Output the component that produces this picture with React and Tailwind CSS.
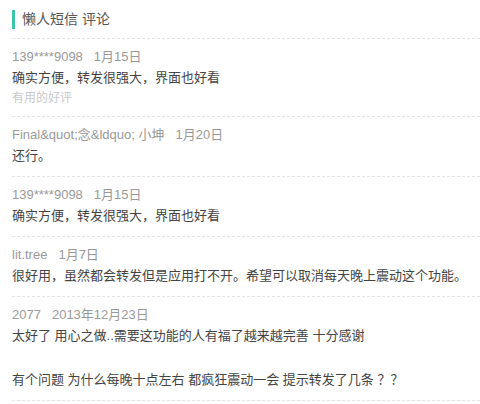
const comments = [
  {
    user: "139****9098",
    date: "1月15日",
    lines: ["确实方便，转发很强大，界面也好看"],
    tag: "有用的好评",
  },
  { user: "Final&quot;念&ldquo; 小坤", date: "1月20日", lines: ["还行。"] },
  { user: "139****9098", date: "1月15日", lines: ["确实方便，转发很强大，界面也好看"] },
  {
    user: "lit.tree",
    date: "1月7日",
    lines: ["很好用，虽然都会转发但是应用打不开。希望可以取消每天晚上震动这个功能。"],
  },
  {
    user: "2077",
    date: "2013年12月23日",
    lines: [
      "太好了 用心之做..需要这功能的人有福了越来越完善 十分感谢",
      "",
      "有个问题 为什么每晚十点左右 都疯狂震动一会 提示转发了几条 ？？",
    ],
  },
];

export default function App() {
  return (
    <div
      className="w-[480px] h-[404px] overflow-hidden bg-white pl-3"
      style={{ fontFamily: '"Liberation Sans", "Noto Sans CJK SC", sans-serif' }}
    >
      <div className="flex items-center h-[38px] pt-[1px]">
        <span className="w-[3px] h-[19px] bg-[#3cc5a8]"></span>
        <span className="ml-[7px] text-[14px] text-[#555]">懒人短信 评论</span>
      </div>
      {comments.map((c, i) => (
        <div key={i} className="border-t border-dashed border-[#e3e3e3] pt-2 pb-[9px]">
          <div className="flex gap-[11px] text-[13px] leading-[20px] text-[#999]">
            <span>{c.user}</span>
            <span>{c.date}</span>
          </div>
          {c.lines.map((l, j) => (
            <div key={j} className="text-[13px] leading-[22px] h-[22px] text-[#444] whitespace-nowrap">
              {l}
            </div>
          ))}
          {c.tag && <div className="text-[12px] leading-[18px] text-[#c8c8c8]">{c.tag}</div>}
        </div>
      ))}
      <div className="border-t border-dashed border-[#e3e3e3]"></div>
    </div>
  );
}
